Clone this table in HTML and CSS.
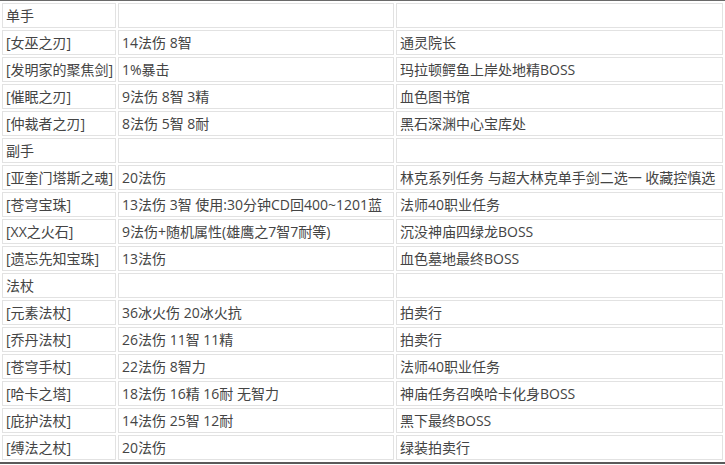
FILE: index.html
```html
<!DOCTYPE html>
<html lang="zh-CN">
<head>
<meta charset="utf-8">
<title>装备表</title>
<link rel="stylesheet" href="styles.css">
</head>
<body>
<table class="gear">
  <colgroup>
    <col class="c1"><col class="c2"><col class="c3">
  </colgroup>
  <tbody>
    <tr><td>单手</td><td></td><td></td></tr>
    <tr><td>[女巫之刃]</td><td>14法伤 8智</td><td>通灵院长</td></tr>
    <tr><td>[发明家的聚焦剑]</td><td>1%暴击</td><td>玛拉顿鳄鱼上岸处地精BOSS</td></tr>
    <tr><td>[催眠之刃]</td><td>9法伤 8智 3精</td><td>血色图书馆</td></tr>
    <tr><td>[仲裁者之刃]</td><td>8法伤 5智 8耐</td><td>黑石深渊中心宝库处</td></tr>
    <tr><td>副手</td><td></td><td></td></tr>
    <tr><td>[亚奎门塔斯之魂]</td><td>20法伤</td><td>林克系列任务 与超大林克单手剑二选一 收藏控慎选</td></tr>
    <tr><td>[苍穹宝珠]</td><td>13法伤 3智 使用:30分钟CD回400~1201蓝</td><td>法师40职业任务</td></tr>
    <tr><td>[XX之火石]</td><td>9法伤+随机属性(雄鹰之7智7耐等)</td><td>沉没神庙四绿龙BOSS</td></tr>
    <tr><td>[遗忘先知宝珠]</td><td>13法伤</td><td>血色墓地最终BOSS</td></tr>
    <tr><td>法杖</td><td></td><td></td></tr>
    <tr><td>[元素法杖]</td><td>36冰火伤 20冰火抗</td><td>拍卖行</td></tr>
    <tr><td>[乔丹法杖]</td><td>26法伤 11智 11精</td><td>拍卖行</td></tr>
    <tr><td>[苍穹手杖]</td><td>22法伤 8智力</td><td>法师40职业任务</td></tr>
    <tr><td>[哈卡之塔]</td><td>18法伤 16精 16耐 无智力</td><td>神庙任务召唤哈卡化身BOSS</td></tr>
    <tr><td>[庇护法杖]</td><td>14法伤 25智 12耐</td><td>黑下最终BOSS</td></tr>
    <tr><td>[缚法之杖]</td><td>20法伤</td><td>绿装拍卖行</td></tr>
  </tbody>
</table>
</body>
</html>
```
FILE: styles.css
```css
html, body {
  margin: 0;
  padding: 0;
  background: #ffffff;
}

.gear {
  width: 725px;
  table-layout: fixed;
  border-collapse: separate;
  border-spacing: 2px;
  border-top: 1px solid #6a6a6a;
  border-bottom: 2px solid #5a5a5a;
  font-family: "Open Sans", "Noto Sans CJK SC", sans-serif;
  font-size: 14px;
  color: #444444;
}

.c1 { width: 114px; }
.c2 { width: 276px; }
.c3 { width: 327px; }

.gear td {
  border: 1px solid #e2e2e2;
  padding: 0 3px;
  height: 23px;
  line-height: 23px;
  white-space: nowrap;
  overflow: hidden;
  vertical-align: middle;
}
```
